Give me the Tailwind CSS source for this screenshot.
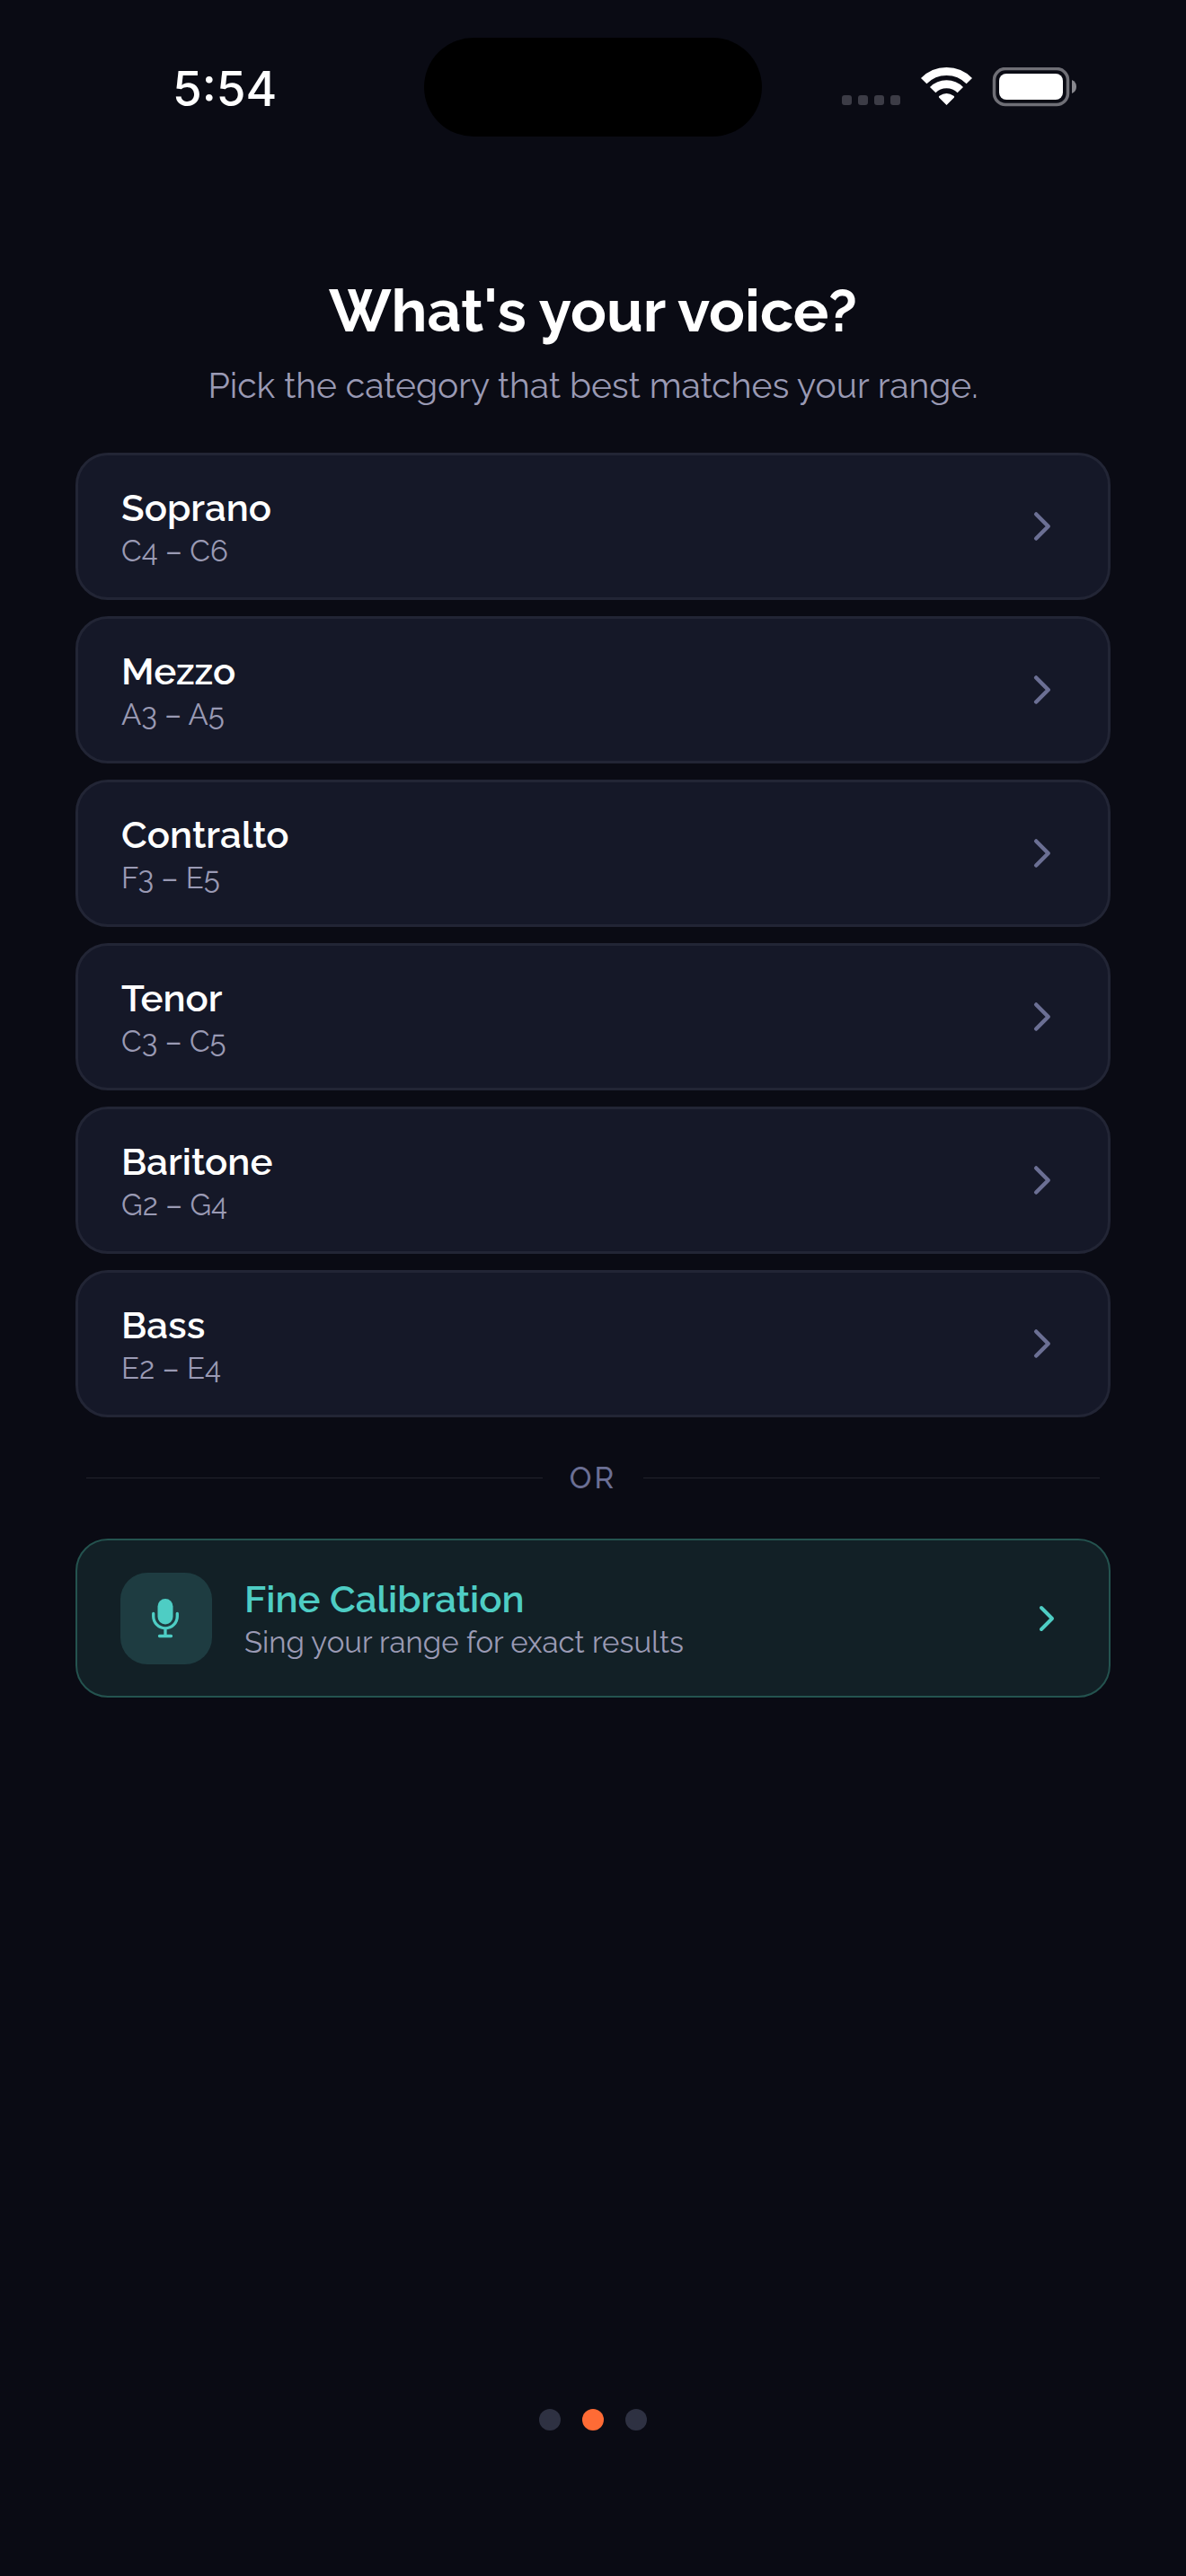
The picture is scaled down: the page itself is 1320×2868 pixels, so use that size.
<!DOCTYPE html>
<html lang="en">
<head>
    <meta charset="UTF-8">
    <meta name="viewport" content="width=device-width, initial-scale=1.0">
    <title>What's your voice?</title>
    <script src="https://cdn.jsdelivr.net/npm/@tailwindcss/browser@4"></script>
</head>
<body class="bg-[#0a0b14] text-white font-['Raleway','Lato',sans-serif] flex flex-col min-h-screen">
    <!-- Status bar -->
    <header class="grid grid-cols-[1fr_376px_1fr] items-center pt-[42px]">
        <time class="pl-48 pt-1 font-['Inter',sans-serif] font-medium text-[53px] leading-none">5:54</time>
        <div class="h-[110px] rounded-full bg-black"></div>
        <div class="flex items-center justify-end pr-[121px]">
            <svg class="w-[262px] h-11" viewBox="0 0 262 44" fill="#fff" role="img" aria-label="Wi-Fi connected, battery full">
                <!-- No signal -->
                <g fill="#3c3c46">
                    <rect x="0" y="31" width="11" height="11" rx="3"/>
                    <rect x="18" y="31" width="11" height="11" rx="3"/>
                    <rect x="36" y="31" width="11" height="11" rx="3"/>
                    <rect x="54" y="31" width="11" height="11" rx="3"/>
                </g>
                <!-- Wi-Fi -->
                <g fill="none" stroke="#fff" stroke-width="9">
                    <path d="M91.200 15.200 A35.500 35.500 0 0 1 141.800 15.200"/>
                    <path d="M101.200 25.200 A21.500 21.500 0 0 1 131.800 25.200"/>
                </g>
                <path d="M116.500 42 L108 33.500 Q107.500 32.500 108.500 31.800 Q116.500 26 124.500 31.800 Q125.500 32.500 125 33.500 Z"/>
                <!-- Battery -->
                <rect x="169.500" y="1.500" width="82" height="40" rx="12.500" fill="none" stroke="#6f6f76" stroke-width="3.500"/>
                <rect x="175" y="7" width="71" height="29" rx="8"/>
                <path d="M256 14 Q261 16 261 21.500 Q261 27 256 29 Z" fill="#88888e"/>
            </svg>
        </div>
    </header>

    <!-- Voice picker -->
    <main class="flex-grow flex flex-col px-[84px] pt-[152px]">
        <h1 class="text-center text-[66px] leading-[84px] font-bold">What's your voice?</h1>
        <p class="mt-[14px] text-center text-[39px] leading-[54px] text-[#9a9ab4]">Pick the category that best matches your range.</p>

        <ul class="mt-12 flex flex-col gap-[18px]">
            <li>
                <button type="button" class="w-full h-[164px] px-12 flex items-center justify-between text-left rounded-[36px] border-3 border-[#222535] bg-[#151828]">
                    <span class="pt-1 flex flex-col gap-[2px]">
                        <span class="text-[42px] leading-[50px] font-semibold">Soprano</span>
                        <span class="text-[33px] leading-[42px] text-[#9a9ab4]">C4 – C6</span>
                    </span>
                    <svg class="w-[54px] h-[54px]" viewBox="0 0 54 54" fill="none" stroke="#6b6f94" stroke-width="4.500" stroke-linecap="round" stroke-linejoin="round"><path d="M22.200 13.500 L35.700 27 L22.200 40.500"/></svg>
                </button>
            </li>
            <li>
                <button type="button" class="w-full h-[164px] px-12 flex items-center justify-between text-left rounded-[36px] border-3 border-[#222535] bg-[#151828]">
                    <span class="pt-1 flex flex-col gap-[2px]">
                        <span class="text-[42px] leading-[50px] font-semibold">Mezzo</span>
                        <span class="text-[33px] leading-[42px] text-[#9a9ab4]">A3 – A5</span>
                    </span>
                    <svg class="w-[54px] h-[54px]" viewBox="0 0 54 54" fill="none" stroke="#6b6f94" stroke-width="4.500" stroke-linecap="round" stroke-linejoin="round"><path d="M22.200 13.500 L35.700 27 L22.200 40.500"/></svg>
                </button>
            </li>
            <li>
                <button type="button" class="w-full h-[164px] px-12 flex items-center justify-between text-left rounded-[36px] border-3 border-[#222535] bg-[#151828]">
                    <span class="pt-1 flex flex-col gap-[2px]">
                        <span class="text-[42px] leading-[50px] font-semibold">Contralto</span>
                        <span class="text-[33px] leading-[42px] text-[#9a9ab4]">F3 – E5</span>
                    </span>
                    <svg class="w-[54px] h-[54px]" viewBox="0 0 54 54" fill="none" stroke="#6b6f94" stroke-width="4.500" stroke-linecap="round" stroke-linejoin="round"><path d="M22.200 13.500 L35.700 27 L22.200 40.500"/></svg>
                </button>
            </li>
            <li>
                <button type="button" class="w-full h-[164px] px-12 flex items-center justify-between text-left rounded-[36px] border-3 border-[#222535] bg-[#151828]">
                    <span class="pt-1 flex flex-col gap-[2px]">
                        <span class="text-[42px] leading-[50px] font-semibold">Tenor</span>
                        <span class="text-[33px] leading-[42px] text-[#9a9ab4]">C3 – C5</span>
                    </span>
                    <svg class="w-[54px] h-[54px]" viewBox="0 0 54 54" fill="none" stroke="#6b6f94" stroke-width="4.500" stroke-linecap="round" stroke-linejoin="round"><path d="M22.200 13.500 L35.700 27 L22.200 40.500"/></svg>
                </button>
            </li>
            <li>
                <button type="button" class="w-full h-[164px] px-12 flex items-center justify-between text-left rounded-[36px] border-3 border-[#222535] bg-[#151828]">
                    <span class="pt-1 flex flex-col gap-[2px]">
                        <span class="text-[42px] leading-[50px] font-semibold">Baritone</span>
                        <span class="text-[33px] leading-[42px] text-[#9a9ab4]">G2 – G4</span>
                    </span>
                    <svg class="w-[54px] h-[54px]" viewBox="0 0 54 54" fill="none" stroke="#6b6f94" stroke-width="4.500" stroke-linecap="round" stroke-linejoin="round"><path d="M22.200 13.500 L35.700 27 L22.200 40.500"/></svg>
                </button>
            </li>
            <li>
                <button type="button" class="w-full h-[164px] px-12 flex items-center justify-between text-left rounded-[36px] border-3 border-[#222535] bg-[#151828]">
                    <span class="pt-1 flex flex-col gap-[2px]">
                        <span class="text-[42px] leading-[50px] font-semibold">Bass</span>
                        <span class="text-[33px] leading-[42px] text-[#9a9ab4]">E2 – E4</span>
                    </span>
                    <svg class="w-[54px] h-[54px]" viewBox="0 0 54 54" fill="none" stroke="#6b6f94" stroke-width="4.500" stroke-linecap="round" stroke-linejoin="round"><path d="M22.200 13.500 L35.700 27 L22.200 40.500"/></svg>
                </button>
            </li>
        </ul>

        <div class="my-12 px-3 flex items-center gap-[30px]">
            <span class="h-px flex-1 bg-[#22222b]"></span>
            <span class="text-[33px] leading-[39px] font-medium tracking-[3px] text-[#6b6f94]">OR</span>
            <span class="h-px flex-1 bg-[#22222b]"></span>
        </div>

        <button type="button" class="w-full h-[177px] px-12 flex items-center text-left rounded-[36px] border-2 border-[#24534f] bg-[#122026]">
            <span class="size-[102px] flex items-center justify-center rounded-[30px] bg-[#1e3c41]">
                <svg class="w-8 h-11" viewBox="0 0 32 44" fill="none" stroke="#4ecdc4" stroke-width="3.300" stroke-linecap="round">
                    <rect x="6.500" y="0" width="17" height="28.500" rx="8.500" fill="#4ecdc4" stroke="none"/>
                    <path d="M1.700 16.500 V19.500 A13.300 13.300 0 0 0 28.300 19.500 V16.500 M15 33 V41.500 M8.500 41.500 H21.500"/>
                </svg>
            </span>
            <span class="ml-9 flex-1 pt-[2px] flex flex-col gap-[2px]">
                <span class="text-[42px] leading-[50px] font-semibold text-[#4ecdc4]">Fine Calibration</span>
                <span class="text-[33px] leading-[42px] text-[#9a9ab4]">Sing your range for exact results</span>
            </span>
            <svg class="w-[42px] h-[42px]" viewBox="0 0 42 42" fill="none" stroke="#4ecdc4" stroke-width="4" stroke-linecap="round" stroke-linejoin="round"><path d="M15 9 L27 21 L15 33"/></svg>
        </button>
    </main>

    <!-- Page dots -->
    <footer class="flex justify-center gap-6 pb-[162px]">
        <span class="size-6 rounded-full bg-[#2e3142]"></span>
        <span class="size-6 rounded-full bg-[#ff6b35]"></span>
        <span class="size-6 rounded-full bg-[#2e3142]"></span>
    </footer>
</body>
</html>
